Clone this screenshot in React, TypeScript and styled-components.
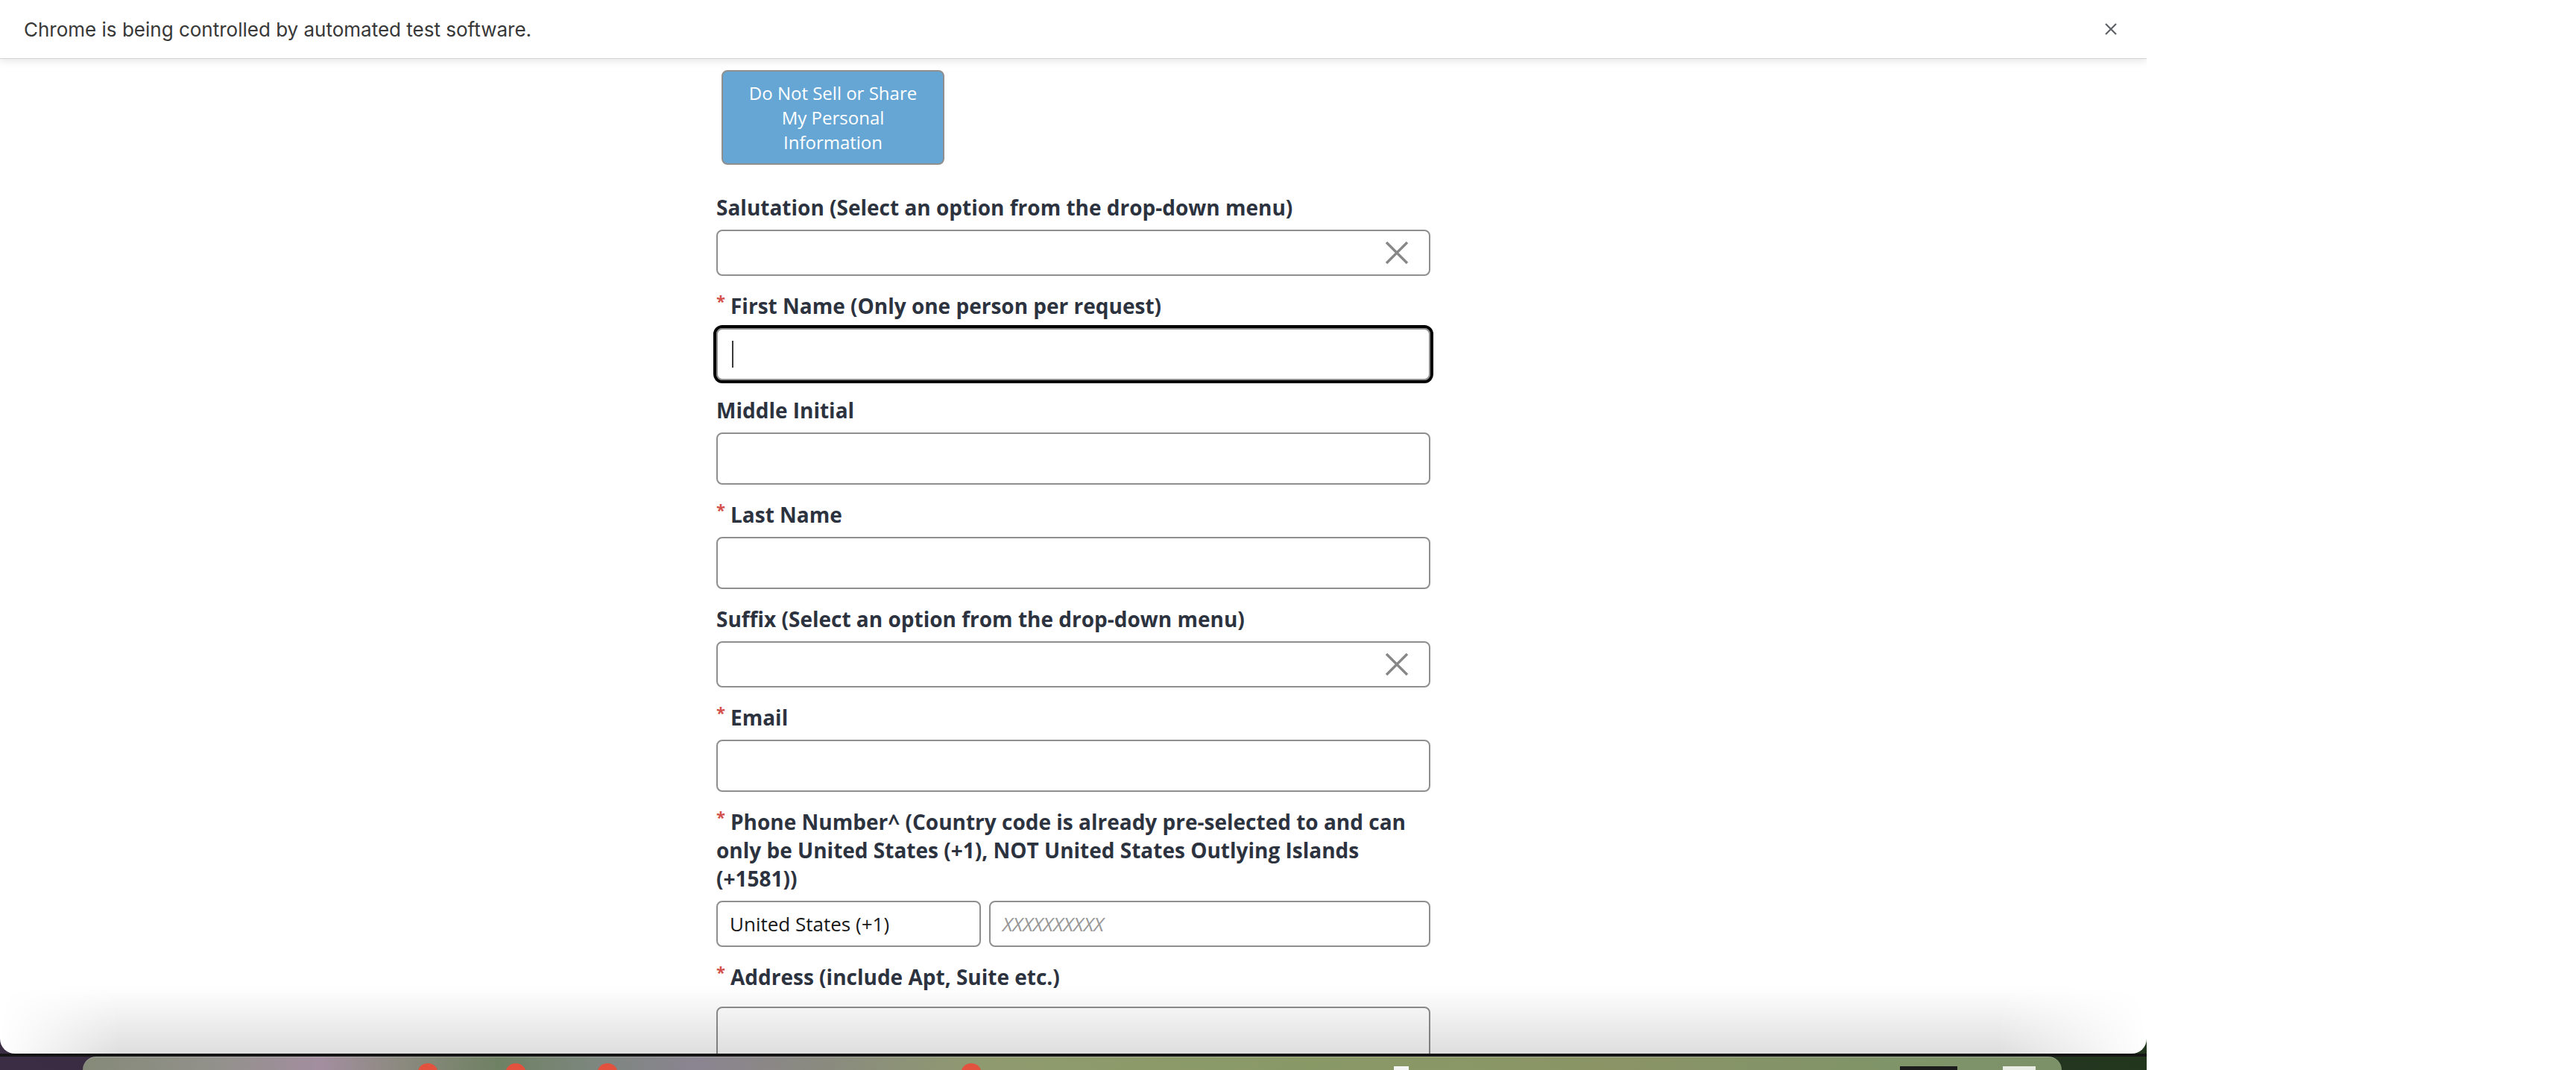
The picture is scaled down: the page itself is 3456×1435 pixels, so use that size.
import React from 'react';
import styled, { createGlobalStyle } from 'styled-components';

const GlobalStyle = createGlobalStyle`
  html, body {
    margin: 0;
    padding: 0;
    background: #ffffff;
  }
  body {
    width: 3456px;
    height: 1435px;
    overflow: hidden;
  }
  * { box-sizing: border-box; }
`;

const Screen = styled.div`
  display: flex;
  width: 3456px;
  height: 1435px;
  background: #ffffff;
`;

const Desktop = styled.div`
  display: flex;
  flex-direction: column;
  width: 2880px;
  height: 1435px;
  background: linear-gradient(90deg, #3b2d44 0%, #2d2a31 45%, #22361d 100%);
`;

const Window = styled.div`
  position: relative;
  display: flex;
  flex-direction: column;
  height: 1413px;
  flex: none;
  background: #ffffff;
  border-radius: 0 0 20px 20px;
  overflow: hidden;
`;

const InfoBar = styled.div`
  position: relative;
  z-index: 2;
  display: flex;
  align-items: center;
  justify-content: space-between;
  flex: none;
  height: 79px;
  padding: 0 39px 0 32px;
  background: #ffffff;
  border-bottom: 1px solid #d2d2d2;
  box-shadow: 0 3px 10px rgba(0, 0, 0, 0.1);
  font-family: Inter, "Liberation Sans", sans-serif;
  font-size: 26px;
  color: #383838;
`;

const CloseButton = styled.span`
  display: flex;
  width: 18px;
  height: 18px;
`;

const Viewport = styled.div`
  position: relative;
  flex: 1;
  overflow: hidden;
`;

const Form = styled.div`
  display: flex;
  flex-direction: column;
  gap: 21px;
  width: 958px;
  margin: 0 auto;
  padding-top: 15px;
  font-family: "Open Sans", "Liberation Sans", sans-serif;
`;

const PrivacyButton = styled.div`
  align-self: flex-start;
  width: 299px;
  height: 127px;
  margin: 0 0 17px 7px;
  padding: 12px 0;
  background: #66a6d5;
  border: 2px solid #8f8f8f;
  border-radius: 8px;
  color: #ffffff;
  font-size: 24px;
  line-height: 33px;
  text-align: center;
`;

const Field = styled.div`
  display: flex;
  flex-direction: column;
`;

const Label = styled.div<{ $gap?: number }>`
  margin-bottom: ${(p) => p.$gap ?? 11}px;
  font-size: 28px;
  font-weight: 700;
  line-height: 38px;
  color: #2c333f;
`;

const Req = styled.span`
  margin-right: 7px;
  font-size: 22px;
  font-weight: 700;
  line-height: 1;
  vertical-align: 9px;
  color: #d4504a;
`;

const InputBox = styled.div<{ $tall?: boolean; $focused?: boolean; $width?: number; $grow?: boolean }>`
  display: flex;
  align-items: center;
  justify-content: space-between;
  flex: ${(p) => (p.$grow ? '1 1 0' : 'none')};
  width: ${(p) => (p.$width ? `${p.$width}px` : 'auto')};
  height: ${(p) => (p.$tall ? 70 : 62)}px;
  padding: 0 27px 0 16px;
  background: #ffffff;
  border: 2px solid #8f8f8f;
  border-radius: 8px;
  outline: ${(p) => (p.$focused ? '4px solid #000000' : 'none')};
  font-size: 26px;
  color: #181818;
`;

const Caret = styled.span`
  width: 2px;
  height: 36px;
  margin-left: 3px;
  background: #3a3a3a;
`;

const Placeholder = styled.span`
  font-style: italic;
  color: #979797;
`;

const PhoneRow = styled.div`
  display: flex;
  gap: 11px;
`;

const BottomFade = styled.div`
  position: absolute;
  left: 0;
  right: 0;
  bottom: 0;
  height: 90px;
  pointer-events: none;
  background: linear-gradient(to bottom, rgba(0, 0, 0, 0) 0%, rgba(0, 0, 0, 0.13) 100%);
  -webkit-mask-image: linear-gradient(90deg, transparent 0, #000 160px, #000 calc(100% - 200px), transparent 100%);
  mask-image: linear-gradient(90deg, transparent 0, #000 160px, #000 calc(100% - 200px), transparent 100%);
`;

const DockRow = styled.div`
  display: flex;
  flex: none;
  height: 22px;
  padding: 4px 114px 0 111px;
  background: linear-gradient(to bottom, #151515 0, #151515 4px, transparent 4px);
`;

const Dock = styled.div`
  display: flex;
  flex: 1;
  overflow: hidden;
  border-top: 1px solid rgba(255, 255, 255, 0.25);
  border-radius: 22px 22px 0 0;
  background: linear-gradient(
    90deg,
    #858a78 0%,
    #93918c 7%,
    #a38e9f 12%,
    #8c8a80 16%,
    #6f8163 21%,
    #7d877f 26%,
    #8b8491 31%,
    #8a8a80 37%,
    #8f9b6e 46%,
    #899966 62%,
    #8a9466 78%,
    #7f9469 92%,
    #7c9168 100%
  );
`;

const DockDot = styled.span<{ $offset: number; $color?: string }>`
  flex: none;
  width: 28px;
  height: 28px;
  margin: 8px 0 0 ${(p) => p.$offset}px;
  border-radius: 50%;
  background: ${(p) => p.$color ?? '#e2523f'};
`;

const DockMark = styled.span<{ $offset: number; $width: number; $color: string }>`
  flex: none;
  width: ${(p) => p.$width}px;
  height: 10px;
  margin: 12px 0 0 ${(p) => p.$offset}px;
  background: ${(p) => p.$color};
`;

const ClearIcon = () => (
  <svg width="32" height="30" viewBox="0 0 32 30">
    <path d="M2 1 L30 29 M30 1 L2 29" stroke="#878787" strokeWidth="3.4" fill="none" />
  </svg>
);

const Required = () => <Req>*</Req>;

const App = () => {
  return (
    <>
      <GlobalStyle />
      <Screen>
        <Desktop>
          <Window>
            <InfoBar>
              <span>Chrome is being controlled by automated test software.</span>
              <CloseButton>
                <svg width="18" height="18" viewBox="0 0 18 18">
                  <path d="M2 2 L16 16 M16 2 L2 16" stroke="#5f6368" strokeWidth="2.2" fill="none" />
                </svg>
              </CloseButton>
            </InfoBar>
            <Viewport>
              <Form>
                <PrivacyButton>
                  Do Not Sell or Share
                  <br />
                  My Personal
                  <br />
                  Information
                </PrivacyButton>

                <Field>
                  <Label>Salutation (Select an option from the drop-down menu)</Label>
                  <InputBox>
                    <span />
                    <ClearIcon />
                  </InputBox>
                </Field>

                <Field>
                  <Label>
                    <Required />
                    First Name (Only one person per request)
                  </Label>
                  <InputBox $tall $focused>
                    <Caret />
                  </InputBox>
                </Field>

                <Field>
                  <Label>Middle Initial</Label>
                  <InputBox $tall />
                </Field>

                <Field>
                  <Label>
                    <Required />
                    Last Name
                  </Label>
                  <InputBox $tall />
                </Field>

                <Field>
                  <Label>Suffix (Select an option from the drop-down menu)</Label>
                  <InputBox>
                    <span />
                    <ClearIcon />
                  </InputBox>
                </Field>

                <Field>
                  <Label>
                    <Required />
                    Email
                  </Label>
                  <InputBox $tall />
                </Field>

                <Field>
                  <Label>
                    <Required />
                    Phone Number^ (Country code is already pre-selected to and can only be United States
                    (+1), NOT United States Outlying Islands (+1581))
                  </Label>
                  <PhoneRow>
                    <InputBox $width={355}>United States (+1)</InputBox>
                    <InputBox $grow>
                      <Placeholder>XXXXXXXXXX</Placeholder>
                    </InputBox>
                  </PhoneRow>
                </Field>

                <Field>
                  <Label $gap={21}>
                    <Required />
                    Address (include Apt, Suite etc.)
                  </Label>
                  <InputBox $tall />
                </Field>
              </Form>
              <BottomFade />
            </Viewport>
          </Window>
          <DockRow>
            <Dock>
              <DockDot $offset={449} />
              <DockDot $offset={90} />
              <DockDot $offset={95} />
              <DockDot $offset={460} />
              <DockMark $offset={553} $width={20} $color="#f4f4f4" />
              <DockMark $offset={659} $width={77} $color="#1c1c1c" />
              <DockMark $offset={61} $width={44} $color="#e9ece4" />
            </Dock>
          </DockRow>
        </Desktop>
      </Screen>
    </>
  );
};

export default App;
